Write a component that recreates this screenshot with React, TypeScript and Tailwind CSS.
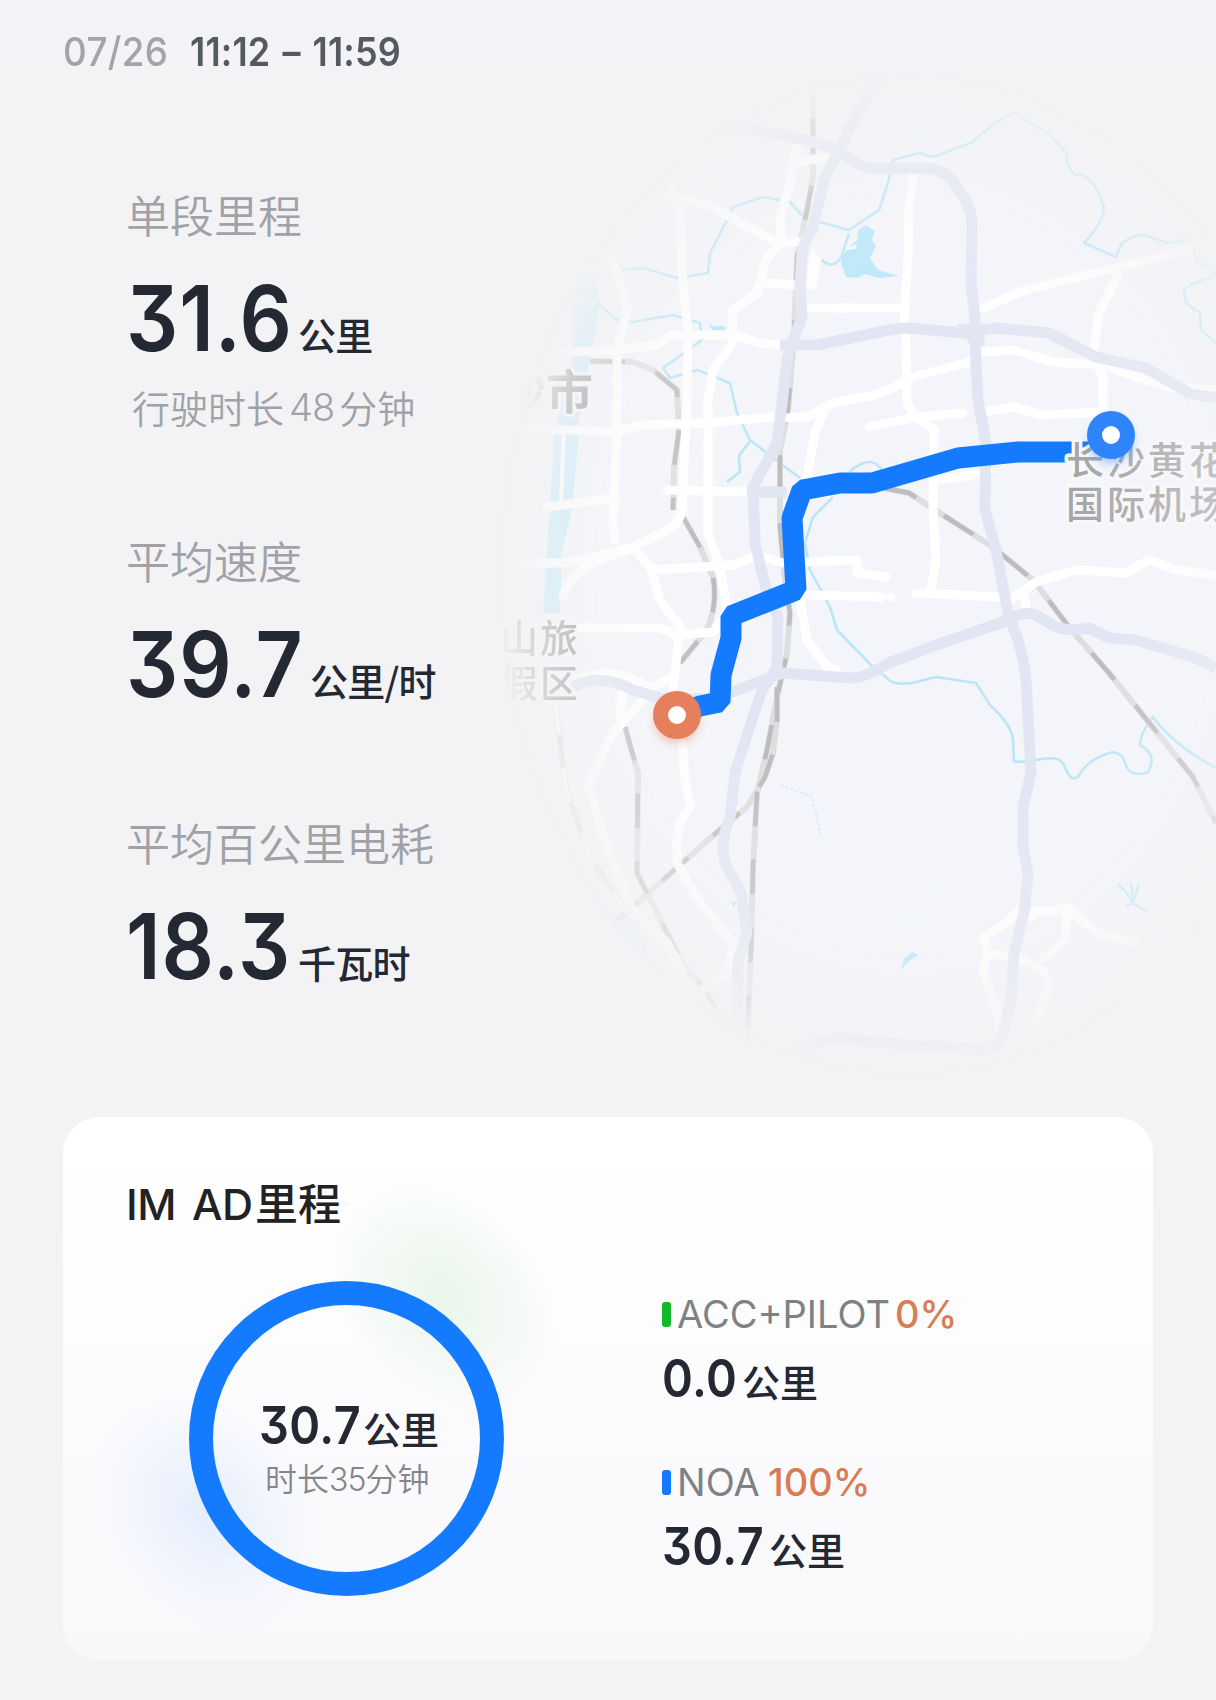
import clsx from "clsx";
import type { ReactNode } from "react";

const HIGHWAYS = [
  "M693 130L733 127L777 133L813 142Q834 148 845 155Q858 167 872 168L929 168Q946 170 956 186Q972 205 972 224L971 283L975 317L976 367L978 400L986 443L985 510L996 550L1008 613L1018 640Q1025 665 1026 680L1031 773L1023 807L1023 847L1028 873L1024 913L1014 953L1011 1000L1003 1033Q998 1050 983 1050L936 1047L869 1042Q845 1036 820 1042L777 1057",
  "M899 50L863 103L843 143L825 177L812 230Q802 245 802 257L800 283L802 317L793 340L787 360L782 403L777 443L753 487L755 543L767 593L778 617L777 667L762 690L747 735L735 773L730 817Q716 850 730 873Q742 890 742 900L747 933L738 960L737 1027",
  "M780 345L817 345L880 332Q896 328 910 328L963 333L996 328L1049 333L1096 357L1146 368L1189 393Q1204 397 1216 397",
  "M573 687Q600 672 633 690L667 700L717 698L763 680L783 673L850 678Q866 678 889 663L936 645L1003 622Q1024 610 1036 615L1054 626Q1066 632 1089 628L1109 638L1136 640L1196 658L1216 668",
  "M747 492L787 492",
];

const ROADS = [
  "M670 177L680 217L683 283L688 333L687 400L682 510Q680 524 662 533L633 547L600 560Q570 572 563 597",
  "M653 197L677 197L713 207L753 230L777 242L800 242",
  "M797 143L790 183L780 217L782 243Q765 255 763 270L757 293L733 310L732 343L713 370L708 400L708 533L720 567L727 607",
  "M550 353L617 350L657 345L673 335L733 335L760 343L780 345",
  "M767 283L797 285",
  "M797 162L825 158",
  "M807 308L903 308",
  "M914 173L909 207L908 257L904 323",
  "M906 337L907 403L916 417L934 430L933 510L936 560L931 590",
  "M783 418L807 417L833 403L870 396L893 388L913 377L969 362",
  "M869 427L916 417L963 413M983 412L1013 407L1043 415L1103 412",
  "M979 352L1013 350L1053 362L1103 365L1136 377L1169 387L1216 390",
  "M983 308L1026 290L1119 267L1189 250",
  "M1119 273L1099 313L1094 350M1098 367L1103 377L1103 413",
  "M520 428L617 432L640 425L707 423L773 417",
  "M823 413L815 433L807 477",
  "M667 490L747 492",
  "M547 507L617 498",
  "M610 247L627 310L617 350L617 430L613 527L615 540",
  "M517 563L567 563L633 547L650 567L660 600L680 627L673 690",
  "M650 570L733 565L753 557",
  "M763 557L783 563L857 560L857 573L886 577",
  "M577 628L660 628L677 635L713 632L727 613",
  "M807 595L882 597M891 597L891.1 597",
  "M916 593L999 597",
  "M1009 600L1036 582L1076 570L1126 573L1149 560L1176 570L1216 575M1023 593L1028 612",
  "M800 600L807 640L827 667L836 670",
  "M577 680Q610 664 650 688L673 677",
  "M623 690L620 717M643 700L613 733L588 785L610 857L633 910L667 943L683 973",
  "M682 743L685 780L690 807Q676 825 677 840L677 863L700 903L733 943L727 973L687 1000",
  "M1019 910L1006 923L983 937L988 953L983 970L998 1013L999 1033M988 953L1009 957M1019 958L1043 970L1049 983L1036 1023M1043 958Q1068 945 1066 930L1066 910M1031 917L1036 910L1049 912L1066 907L1096 932L1136 943",
  "M933 480L953 478L989 472",
];

const RAILS = [
  "M813 50L813 177L807 210L797 257L794 337L788 410L780 450L780 527L785 580L790 613L787 653L778 693L767 750L757 793L753 867L751 950L747 1040",
  "M777 687L777 720L773 753L765 777L747 807L723 827L637 903L603 933",
  "M590 361L633 362L653 370L677 390L679 430L674 467L673 510",
  "M683 517L700 547L713 577Q718 604 707 630L680 663",
  "M625 727L638 773L637 873L667 933L687 970L703 987L727 1027L767 1057",
  "M883 488L909 493L946 517L993 547L1033 580L1069 627L1109 673L1193 777L1216 823",
];

const RIVERS = [
  "M1016 112Q998 118 973 142L933 157L919 153L893 160L888 183L879 210L849 230L820 222",
  "M1016 112L1033 125Q1048 130 1066 153Q1068 172 1076 175Q1092 172 1104 207Q1104 222 1084 243L1100 250L1116 257L1122 243Q1134 235 1143 235L1169 243L1186 240",
  "M1193 250L1198 263Q1214 265 1214 277Q1186 284 1184 292Q1184 306 1200 312L1201 330L1216 343",
  "M617 263L623 270L643 268L677 278L708 273L710 253L727 220L733 207L763 197L790 202L802 215",
  "M849 233L841 258Q832 270 822 260",
  "M597 303L617 320L633 322L673 315L700 323L702 340L663 368L670 378L697 370L730 383L737 413L750 440L773 458L800 478",
  "M849 472Q873 452 883 472M833 497L813 517L805 543L810 570L830 607L837 630L873 667L886 677Q892 686 912 683L936 677L976 683L990 705Q1012 725 1013 740L1014 762L1033 761Q1059 754 1064 765Q1072 786 1080 774Q1089 758 1113 752Q1124 754 1126 766Q1132 778 1148 772Q1158 755 1140 745Q1140 733 1153 717Q1172 744 1216 768",
  "M750 441L739 456L740 472L727 482",
];

const ROUTE =
  "M677 715L700 706L720 702L721 675L731 638L731 616L796 590L792 518L802 490L840 483L872 483L958 458L1018 452L1098 452";

const DIGITS =
  "inline-block origin-left whitespace-nowrap font-['Inter'] [font-feature-settings:'cv09'] leading-none";

function Pin({ x, y, color }: { x: number; y: number; color: string }) {
  return (
    <g>
      <circle cx={x} cy={y + 6} r="22" fill={color} opacity=".45" filter="url(#pin-shadow)" />
      <circle cx={x} cy={y} r="24" fill={color} />
      <circle cx={x} cy={y} r="9" fill="#fff" />
    </g>
  );
}

function TripMap() {
  return (
    <svg
      viewBox="460 0 756 1117"
      className="h-[1117px] w-[756px] shrink-0 font-['Noto_Sans_CJK_SC',sans-serif]"
      fill="none"
    >
      <defs>
        <radialGradient
          id="map-fade"
          gradientUnits="userSpaceOnUse"
          cx="0"
          cy="0"
          r="1"
          gradientTransform="translate(908 575) scale(415 508)"
        >
          <stop offset=".5" stopColor="#fff" />
          <stop offset=".75" stopColor="#fff" stopOpacity=".7" />
          <stop offset=".9" stopColor="#fff" stopOpacity=".35" />
          <stop offset="1" stopColor="#fff" stopOpacity="0" />
        </radialGradient>
        <mask id="map-mask" maskUnits="userSpaceOnUse" x="460" y="0" width="756" height="1117">
          <rect x="460" width="756" height="1117" fill="url(#map-fade)" />
        </mask>
        <linearGradient id="airport" gradientUnits="userSpaceOnUse" x1="1066" y1="0" x2="1216" y2="0">
          <stop stopColor="#a3a3a3" />
          <stop offset="1" stopColor="#c2c2c4" />
        </linearGradient>
        <linearGradient id="city" gradientUnits="userSpaceOnUse" x1="520" y1="0" x2="552" y2="0">
          <stop stopColor="#8f8f8f" stopOpacity="0" />
          <stop offset="1" stopColor="#8f8f8f" />
        </linearGradient>
        <filter id="pin-shadow" x="-50%" y="-50%" width="200%" height="200%">
          <feGaussianBlur stdDeviation="5" />
        </filter>
      </defs>

      <g mask="url(#map-mask)">
        <rect x="460" width="756" height="1117" fill="#f4f5fa" />

        {/* water */}
        <g fill="#b8e7f8">
          <path d="M572 290L592 270L600 300L595 333L588 370L578 423L578 443L572 510L562 550L560 613L543 613L547 550L550 500L555 433L573 350Z" opacity=".75" />
          <path d="M553 857L593 898L633 925L645 945L652 968L672 1005L655 985L630 955L600 925Z" opacity=".6" />
          <path d="M866 225L875 231L872 240L876 246L870 258L878 270L899 276L880 278L865 274L857 278L846 277L841 263L843 254L848 250L856 249L857 244L850 246L857 240L858 230Z" />
          <path d="M901 970L904 959L912 952L919 955L909 961Z" />
          <path d="M708 322L713 326L724 326L726 330L712 330Z" />
          <path d="M731 903L736 901L734 907Z" />
        </g>
        <g stroke="#bae6f7" strokeWidth="2.6" strokeLinejoin="round">
          {RIVERS.map((d) => (
            <path key={d} d={d} />
          ))}
        </g>
        <path
          d="M1118 884L1126 892L1133 903L1147 912M1131 882L1134 903M1139 884L1133 903L1126 906"
          stroke="#c0e6f6"
          strokeWidth="2.4"
        />
        <path d="M781 785L812 797L821 836" stroke="#bde6f6" strokeDasharray="3 2" />

        <path d="M564 425L561 500" stroke="#fff" strokeWidth="4" />

        <g stroke="#dedede" strokeWidth="6" strokeLinejoin="round">
          {RAILS.map((d) => (
            <path key={d} d={d} />
          ))}
        </g>
        <g stroke="#bdbdbd" strokeWidth="4.5" strokeDasharray="35 33">
          {RAILS.map((d) => (
            <path key={d} d={d} />
          ))}
        </g>
        <path d="M555 700L563 767L567 793L590 857L627 913" stroke="#dadada" strokeWidth="5" />
        <path d="M555 700L563 767L567 793L590 857L627 913" stroke="#fff" strokeWidth="4" strokeDasharray="35 33" />

        <g stroke="#fff" strokeWidth="9" strokeLinecap="round" strokeLinejoin="round">
          {ROADS.map((d) => (
            <path key={d} d={d} />
          ))}
        </g>
        <g stroke="#e2e6f3" strokeWidth="11" strokeLinejoin="round">
          {HIGHWAYS.map((d) => (
            <path key={d} d={d} />
          ))}
        </g>
        <path d="M957 324h26l2 22h-14z" fill="#e2e6f3" />
        <path d="M813 247L821 262L816 290L807 288L808 262Z" fill="#fff" />

        <g
          fill="#9b9b9b"
          stroke="#f8f8fb"
          strokeWidth="6"
          strokeLinejoin="round"
          className="[paint-order:stroke]"
        >
          <text x="499" y="409" fontSize="47" fontWeight="700" fill="url(#city)">
            沙市
          </text>
          <text x="500" y="652" fontSize="38" letterSpacing="2" fontWeight="500">
            山旅
          </text>
          <text x="500" y="697" fontSize="38" letterSpacing="2" fontWeight="500">
            假区
          </text>
        </g>
      </g>

      <path d={ROUTE} stroke="#147bff" strokeWidth="21" strokeLinejoin="bevel" />

      <g
        fill="url(#airport)"
        stroke="#f8f8fb"
        strokeWidth="7"
        strokeLinejoin="round"
        fontWeight="500"
        fontSize="38"
        letterSpacing="3"
        className="[paint-order:stroke]"
      >
        <text x="1066" y="474">
          长沙黄花
        </text>
        <text x="1066" y="518">
          国际机场
        </text>
      </g>

      <Pin x={1111} y={435} color="#2f84fb" />
      <Pin x={677} y={715} color="#e67f5c" />
    </svg>
  );
}

type StatProps = {
  label: string;
  value: string;
  unit: string;
  valueClass: string;
  className?: string;
  children?: ReactNode;
};

function Stat({ label, value, unit, valueClass, className, children }: StatProps) {
  return (
    <div className={clsx("pl-[62px]", className)}>
      <div className="h-11 text-[44px] leading-none font-[350] whitespace-nowrap text-[#a1a2a7]">{label}</div>
      <div className="mt-[37px] flex h-[90px] items-baseline text-[#242833]">
        <div className={clsx("shrink-0", valueClass)}>
          <span className={clsx(DIGITS, "scale-x-[.9] text-[91px] font-semibold tracking-[1px]")}>{value}</span>
        </div>
        <span className="relative -top-px text-[38px] leading-none font-medium tracking-[-0.8px] whitespace-nowrap">
          {unit}
        </span>
      </div>
      {children}
    </div>
  );
}

function Distance({ value, valueClass }: { value: string; valueClass: string }) {
  return (
    <div className="flex h-[52px] items-baseline text-[#242833]">
      <div className={clsx("shrink-0", valueClass)}>
        <span className={clsx(DIGITS, "scale-x-[.9] text-[52px] font-semibold tracking-[0.5px]")}>{value}</span>
      </div>
      <span className="text-[38px] leading-none font-medium whitespace-nowrap">公里</span>
    </div>
  );
}

type ModeProps = {
  name: string;
  percent: string;
  value: string;
  barClass: string;
  nameClass: string;
  valueClass: string;
};

function Mode({ name, percent, value, barClass, nameClass, valueClass }: ModeProps) {
  return (
    <div>
      <div className="flex h-[38px] items-center font-['Inter'] text-[38px] leading-none">
        <span className={clsx("mt-px h-[25px] w-[9px] shrink-0 rounded-[3px]", barClass)} />
        <span className={clsx("ml-1.5 shrink-0 whitespace-nowrap text-[#808186]", nameClass)}>{name}</span>
        <span className="font-medium whitespace-nowrap text-[#d87c54]">{percent}</span>
      </div>
      <div className="mt-5">
        <Distance value={value} valueClass={valueClass} />
      </div>
    </div>
  );
}

export default function App() {
  return (
    <main className="h-[1700px] w-[1216px] overflow-hidden bg-[#f3f3f5] font-['Noto_Sans_CJK_SC',sans-serif]">
      <section className="flex h-[1117px] bg-linear-to-b from-[#f4f3f8] to-[#f3f3f5] to-10%">
        <div className="w-[460px] shrink-0 pt-8 pl-16">
          <header className="-ml-px flex h-10">
            <div className="w-[127px] shrink-0">
              <span className={clsx(DIGITS, "scale-x-[.92] text-[40px] font-medium tracking-[0.4px] text-[#a3a4a9]")}>
                07/26
              </span>
            </div>
            <span
              className={clsx(
                DIGITS,
                "scale-x-[.9] text-[40px] font-semibold tracking-[0.2px] text-[#555962] [word-spacing:3px]"
              )}
            >
              11:12 – 11:59
            </span>
          </header>

          <Stat label="单段里程" value="31.6" unit="公里" valueClass="w-[172px]" className="mt-[120px]">
            <div className="mt-[25px] flex h-[38px] pl-1.5 text-[38px] leading-none font-[350] whitespace-nowrap text-[#a1a2a7]">
              <span>行驶时长</span>
              <span className="mx-[5px] font-['Inter'] font-light tracking-[-1px]">48</span>
              <span>分钟</span>
            </div>
          </Stat>
          <Stat label="平均速度" value="39.7" unit="公里/时" valueClass="w-[184px]" className="mt-[112px]" />
          <Stat label="平均百公里电耗" value="18.3" unit="千瓦时" valueClass="w-[172px]" className="mt-[111px]" />
        </div>

        <TripMap />
      </section>

      <section className="relative mx-[63px] h-[543px] w-[1090px] overflow-hidden rounded-[36px] bg-linear-to-b from-white to-[#f8f8fb] pt-[63px] pl-[65px]">
        {/* soft glows behind the ring */}
        <div className="absolute top-[43px] left-[280px] h-[270px] w-[200px] -rotate-[40deg] bg-radial-[closest-side] from-[#e8f5ea] to-transparent" />
        <div className="absolute top-[265px] left-[42px] h-[260px] w-[200px] -rotate-[40deg] bg-radial-[closest-side] from-[#e5eefd] to-transparent" />

        <h2 className="relative -ml-0.5 flex h-[43px] items-baseline text-[43px] leading-none font-medium whitespace-nowrap text-[#222]">
          <span className="w-[129px] shrink-0 font-['Inter'] tracking-[-0.5px] [word-spacing:5px]">IM AD</span>
          <span>里程</span>
        </h2>

        <div className="relative mt-[58px] flex">
          <div className="ml-[61px] flex h-[315px] w-[315px] shrink-0 flex-col rounded-full border-[24px] border-[#147bff] pt-[95px] pl-[46px]">
            <Distance value="30.7" valueClass="w-[104px]" />
            <div className="mt-[9px] pl-1.5 text-[32px] leading-none font-[350] whitespace-nowrap text-[#85868b]">
              时长<span className="font-['Inter'] font-light tracking-[-1px]">35</span>分钟
            </div>
          </div>

          <div className="ml-[158px] flex flex-col gap-[58px] pt-[14px]">
            <Mode
              name="ACC+PILOT"
              percent="0%"
              value="0.0"
              barClass="bg-[#12b928]"
              nameClass="w-[218px]"
              valueClass="w-[80px]"
            />
            <Mode
              name="NOA"
              percent="100%"
              value="30.7"
              barClass="bg-[#147bff]"
              nameClass="w-[91px]"
              valueClass="w-[107px]"
            />
          </div>
        </div>
      </section>
    </main>
  );
}
